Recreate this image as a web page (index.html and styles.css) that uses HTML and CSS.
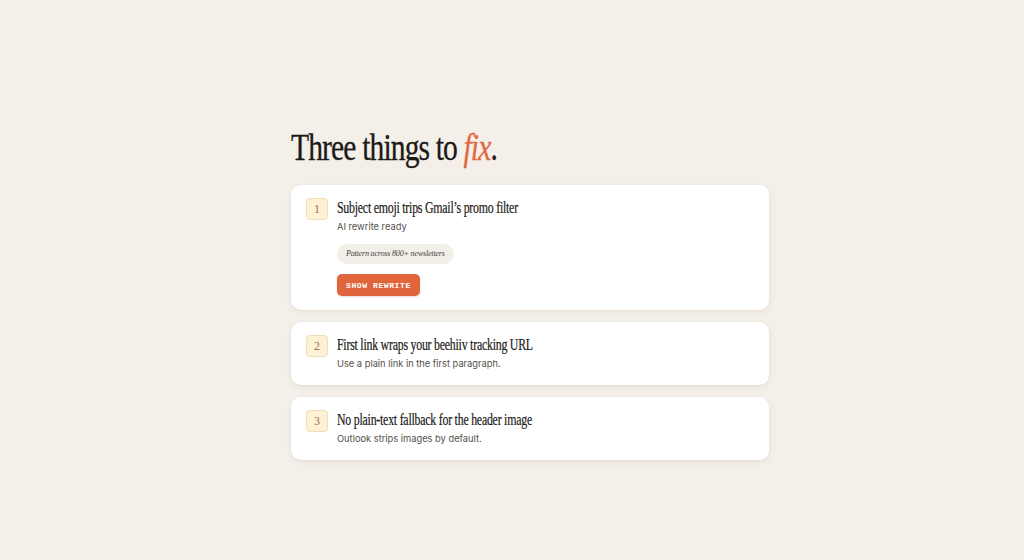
FILE: index.html
```html
<!DOCTYPE html>
<html>
<head>
<meta charset="utf-8">
<link rel="stylesheet" href="styles.css">
</head>
<body>
<main class="wrap">
  <h1 class="title"><span class="squeeze">Three things to <em class="accent">fix</em>.</span></h1>
  <section class="list">
    <article class="card">
      <div class="badge">1</div>
      <div class="body">
        <h2 class="item-title"><span class="squeeze">Subject emoji trips Gmail’s promo filter</span></h2>
        <p class="item-sub">AI rewrite ready</p>
        <span class="pill">Pattern across 800+ newsletters</span>
        <button class="btn">SHOW REWRITE</button>
      </div>
    </article>
    <article class="card">
      <div class="badge">2</div>
      <div class="body">
        <h2 class="item-title"><span class="squeeze">First link wraps your beehiiv tracking URL</span></h2>
        <p class="item-sub">Use a plain link in the first paragraph.</p>
      </div>
    </article>
    <article class="card">
      <div class="badge">3</div>
      <div class="body">
        <h2 class="item-title"><span class="squeeze">No plain-text fallback for the header image</span></h2>
        <p class="item-sub">Outlook strips images by default.</p>
      </div>
    </article>
  </section>
</main>
</body>
</html>
```
FILE: styles.css
```css
html, body {
  margin: 0;
  padding: 0;
  background: #f4efe9;
  width: 1024px;
  height: 560px;
  overflow: hidden;
}
.wrap {
  width: 478px;
  margin: 0 auto;
  padding-top: 126px;
  position: relative;
  left: 18px;
}
.squeeze {
  display: inline-block;
  transform-origin: left center;
  white-space: nowrap;
}
.title {
  margin: 0 0 15px 0;
  font-family: "Liberation Serif", serif;
  font-weight: 400;
  font-size: 37px;
  line-height: 44px;
  letter-spacing: -1.1px;
  color: #1c1a17;
  -webkit-text-stroke: 0.3px #1c1a17;
}
.title .squeeze {
  transform: scaleX(0.8);
}
.accent {
  color: #e0673f;
  font-style: italic;
  -webkit-text-stroke: 0.3px #e0673f;
}
.list {
  display: flex;
  flex-direction: column;
  gap: 12px;
}
.card {
  background: #ffffff;
  border-radius: 10px;
  box-shadow: 0 1px 3px rgba(80, 60, 30, 0.06), 0 2px 8px rgba(80, 60, 30, 0.05);
  display: flex;
  gap: 9px;
  padding: 13px 15px 14px 15px;
}
.badge {
  flex: none;
  width: 20px;
  height: 20px;
  border: 1px solid #f0ddb0;
  background: #fdf1d6;
  border-radius: 4px;
  display: flex;
  align-items: center;
  justify-content: center;
  font-family: "Liberation Serif", serif;
  font-size: 12px;
  color: #9a7436;
}
.body {
  display: flex;
  flex-direction: column;
  align-items: flex-start;
}
.item-title {
  margin: 0;
  font-family: "Liberation Serif", serif;
  font-weight: 400;
  font-size: 16px;
  line-height: 20px;
  letter-spacing: -0.3px;
  color: #1c1a17;
  -webkit-text-stroke: 0.2px #1c1a17;
}
.item-title .squeeze {
  transform: scaleX(0.74);
}
.item-sub {
  margin: 2px 0 0 0;
  font-family: "Inter", sans-serif;
  font-size: 9.3px;
  line-height: 14px;
  color: #55504a;
}
.pill {
  margin-top: 10px;
  display: inline-block;
  background: #f2eee8;
  border-radius: 11px;
  padding: 0 9px;
  height: 20px;
  line-height: 20px;
  font-family: "Liberation Serif", serif;
  font-style: italic;
  font-size: 8.2px;
  letter-spacing: -0.25px;
  color: #4a4540;
}
.btn {
  margin-top: 10px;
  border: none;
  background: #e0653d;
  color: #ffffff;
  border-radius: 5px;
  height: 22px;
  padding: 0 9px;
  font-family: "Liberation Mono", monospace;
  font-weight: 700;
  font-size: 8px;
  letter-spacing: 0.6px;
  box-shadow: 0 1px 2px rgba(150, 60, 20, 0.2);
}
```
